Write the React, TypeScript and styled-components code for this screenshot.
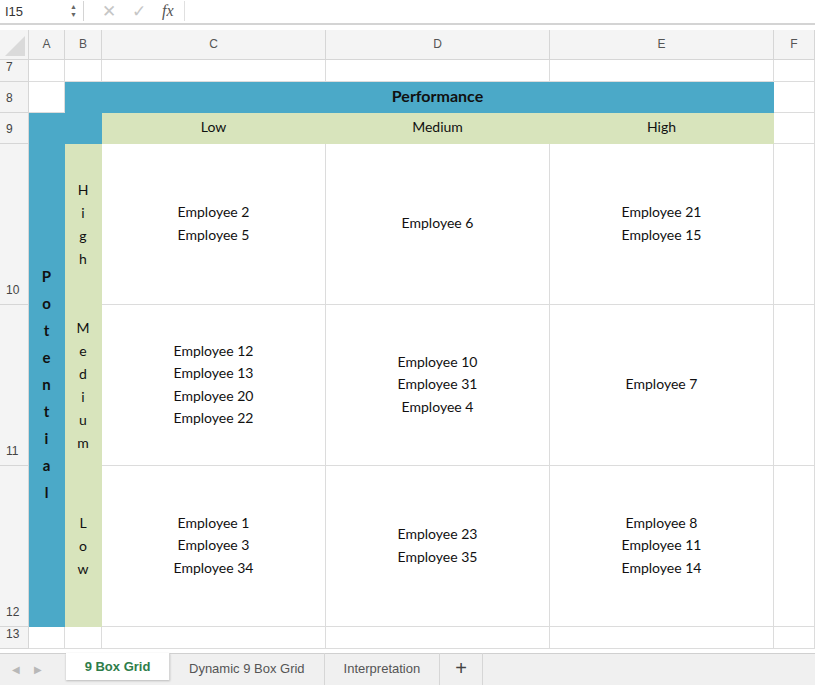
import React from "react";
import styled, { createGlobalStyle } from "styled-components";

const G = createGlobalStyle`
  body { margin: 0; background: #fff; font-family: "Liberation Sans", Arial, sans-serif; }
`;
const Page = styled.div`width: 815px; height: 685px; display: flex; flex-direction: column; overflow: hidden;`;
const FBar = styled.div`height: 24px; display: flex; align-items: center; border-bottom: 2px solid #d4d4d4; font-size: 13px; color: #333;`;
const NameBox = styled.div`width: 84px; padding-left: 5px; display: flex; justify-content: space-between; align-items: center; border-right: 1px solid #d4d4d4; height: 20px; padding-right: 6px; box-sizing: border-box;`;
const Arrows = styled.div`display: flex; flex-direction: column; font-size: 7px; line-height: 8px; color: #666;`;
const FIcons = styled.div`display: flex; gap: 16px; align-items: center; padding: 0 10px 0 18px; color: #c6c6c6; font-size: 17px; border-right: 1px solid #e0e0e0; height: 20px;`;
const Fx = styled.span`font-family: "Liberation Serif", serif; font-style: italic; color: #555; font-size: 16px;`;
const Sheet = styled.div`
  margin-top: 5px; display: grid;
  grid-template-columns: 29px 36px 37px 224px 224px 224px 41px;
  grid-template-rows: 30px 22px 31px 31px 161px 161px 161px 22px 4px;
`;
const Cell = styled.div<{ c: number; r: number; cs?: number; rs?: number; bg?: string }>`
  grid-column: ${p => p.c} / span ${p => p.cs ?? 1};
  grid-row: ${p => p.r} / span ${p => p.rs ?? 1};
  background: ${p => p.bg ?? "#fff"};
  border-right: 1px solid ${p => p.bg ?? "#dcdcdc"};
  border-bottom: 1px solid ${p => p.bg ?? "#dcdcdc"};
  box-sizing: border-box;
  display: flex; flex-direction: column; align-items: center; justify-content: center;
  font-family: Lato, "Open Sans", sans-serif; font-size: 14px; color: #111; line-height: 22.5px;
`;
const ColHead = styled(Cell)`background: #f4f4f4; border-color: #d6d6d6; font-family: "Liberation Sans", sans-serif; font-size: 12px; color: #555;`;
const RowHead = styled(Cell)`background: #f4f4f4; border-color: #d6d6d6; font-family: "Liberation Sans", sans-serif; font-size: 12px; color: #444; align-items: flex-start; justify-content: flex-end; padding: 0 0 2px 6px;`;
const Corner = styled(Cell)`background: #f4f4f4; border-color: #d6d6d6; position: relative;`;
const Tri = styled.div`position: absolute; right: 3px; bottom: 3px; width: 0; height: 0; border-left: 20px solid transparent; border-bottom: 20px solid #dadada;`;
const Vert = styled.div<{ bold?: boolean }>`display: flex; flex-direction: column; align-items: center; font-weight: ${p => p.bold ? 700 : 400}; font-size: ${p => p.bold ? 15 : 14}px; line-height: ${p => p.bold ? 27 : 23}px;`;
const Title = styled.span`font-weight: 700; font-size: 16px;`;
const Tabs = styled.div`margin-top: auto; height: 33px; background: #f0f0f0; border-top: 1px solid #d0d0d0; display: flex; align-items: stretch; font-family: "Liberation Sans", sans-serif; font-size: 13px; color: #555; white-space: nowrap;`;
const Nav = styled.div`width: 66px; display: flex; gap: 14px; align-items: center; padding-left: 12px; color: #b8b8b8; font-size: 10px; box-sizing: border-box;`;
const Tab = styled.div<{ active?: boolean }>`
  padding: 0 19px; display: flex; align-items: center; margin-top: -1px;
  border-right: 1px solid #d6d6d6;
  ${p => p.active ? "background:#fff; color:#2e7d4a; font-weight:700; width:104px; padding:0; justify-content:center; box-shadow: 0 1px 2px #bbb; box-sizing:border-box; margin-bottom:5px;" : ""}
`;
const Plus = styled(Tab)`font-size: 20px; color: #444; padding: 0 15px;`;

const emp = (xs: string[]) => xs.map(x => <div key={x}>{x}</div>);
const letters = (w: string) => w.split("").map((l, i) => <span key={i}>{l}</span>);
const BLUE = "#4ba9c8", GREEN = "#d8e4bc";

export default function App() {
  const cols = ["A", "B", "C", "D", "E", "F"];
  const rows = ["7", "8", "9", "10", "11", "12", "13"];
  return (
    <Page>
      <G />
      <FBar>
        <NameBox>I15<Arrows><span>▲</span><span>▼</span></Arrows></NameBox>
        <FIcons><span>✕</span><span>✓</span><Fx>fx</Fx></FIcons>
      </FBar>
      <Sheet>
        <Corner c={1} r={1}><Tri /></Corner>
        {cols.map((c, i) => <ColHead key={c} c={i + 2} r={1}>{c}</ColHead>)}
        {rows.map((r, i) => <RowHead key={r} c={1} r={i + 2}>{r}</RowHead>)}
        {[2, 3, 4, 5, 6, 7].map(c => <Cell key={"r7" + c} c={c} r={2} />)}
        <Cell c={2} r={3} />
        <Cell c={3} r={3} bg={BLUE} />
        <Cell c={4} r={3} cs={3} bg={BLUE}><Title>Performance</Title></Cell>
        <Cell c={7} r={3} />
        <Cell c={2} r={4} bg={BLUE} />
        <Cell c={3} r={4} bg={BLUE} />
        <Cell c={4} r={4} bg={GREEN}>Low</Cell>
        <Cell c={5} r={4} bg={GREEN}>Medium</Cell>
        <Cell c={6} r={4} bg={GREEN}>High</Cell>
        <Cell c={7} r={4} />
        <Cell c={2} r={5} rs={3} bg={BLUE}><Vert bold>{letters("Potential")}</Vert></Cell>
        <Cell c={3} r={5} bg={GREEN}><Vert>{letters("High")}</Vert></Cell>
        <Cell c={3} r={6} bg={GREEN}><Vert>{letters("Medium")}</Vert></Cell>
        <Cell c={3} r={7} bg={GREEN}><Vert>{letters("Low")}</Vert></Cell>
        <Cell c={4} r={5}>{emp(["Employee 2", "Employee 5"])}</Cell>
        <Cell c={5} r={5}>{emp(["Employee 6"])}</Cell>
        <Cell c={6} r={5}>{emp(["Employee 21", "Employee 15"])}</Cell>
        <Cell c={7} r={5} />
        <Cell c={4} r={6}>{emp(["Employee 12", "Employee 13", "Employee 20", "Employee 22"])}</Cell>
        <Cell c={5} r={6}>{emp(["Employee 10", "Employee 31", "Employee 4"])}</Cell>
        <Cell c={6} r={6}>{emp(["Employee 7"])}</Cell>
        <Cell c={7} r={6} />
        <Cell c={4} r={7}>{emp(["Employee 1", "Employee 3", "Employee 34"])}</Cell>
        <Cell c={5} r={7}>{emp(["Employee 23", "Employee 35"])}</Cell>
        <Cell c={6} r={7}>{emp(["Employee 8", "Employee 11", "Employee 14"])}</Cell>
        <Cell c={7} r={7} />
        {[2, 3, 4, 5, 6, 7].map(c => <Cell key={"r13" + c} c={c} r={8} />)}
      </Sheet>
      <Tabs>
        <Nav><span>◀</span><span>▶</span></Nav>
        <Tab active>9 Box Grid</Tab>
        <Tab>Dynamic 9 Box Grid</Tab>
        <Tab>Interpretation</Tab>
        <Plus>+</Plus>
      </Tabs>
    </Page>
  );
}
